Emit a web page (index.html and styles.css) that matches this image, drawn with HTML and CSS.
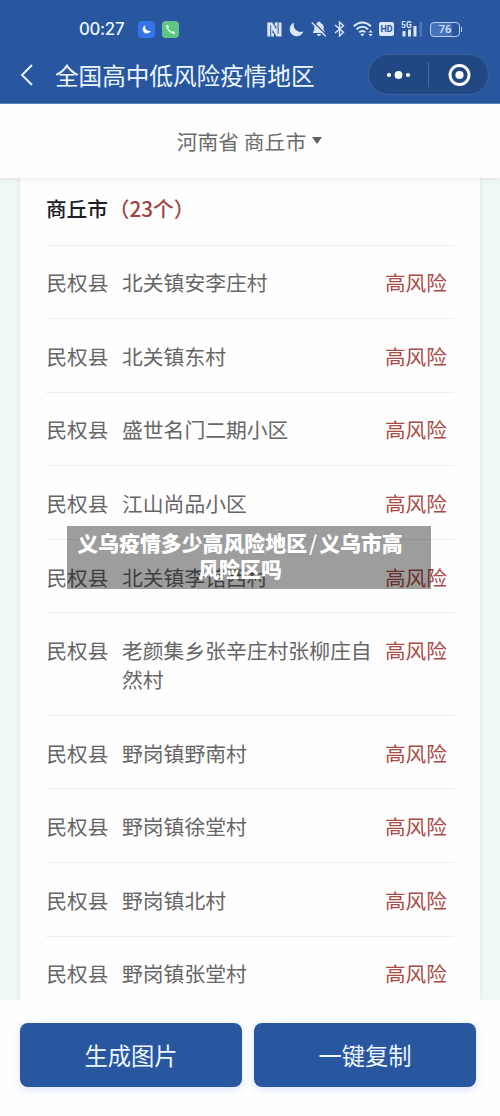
FILE: index.html
```html
<!DOCTYPE html>
<html lang="zh-CN">
<head>
<meta charset="utf-8">
<title>全国高中低风险疫情地区</title>
<link rel="stylesheet" href="styles.css">
</head>
<body>
<div class="screen">
  <header class="top">
    <div class="status">
      <span class="clock">00:27</span>
      <svg class="app-moon" width="17" height="17" viewBox="0 0 17 17"><rect width="17" height="17" rx="4" fill="#3473e8"/><path d="M7.2 4.2A4.3 4.3 0 1 0 12.9 9.8 4.5 4.5 0 0 1 7.2 4.2Z" fill="#fff"/></svg>
      <svg class="app-phone" width="17" height="17" viewBox="0 0 17 17"><rect width="17" height="17" rx="4" fill="#5fc584"/><path d="M4.900 4.500Q5 10.500 12.300 12.500" fill="none" stroke="#e6fff0" stroke-width="1.400"/><path d="M4.200 4.200 5.900 3.800 7 6 5.500 7.200ZM9.600 11.300 10.900 9.900 13 11.200 12.400 12.900Z" fill="#e6fff0"/></svg>
      <div class="signals">
        <svg width="15" height="15" viewBox="0 0 15 15"><path d="M.3 .5H5.200L9.300 7.500V3.800H7.800V.5H14.500V14.500H9.600L5.500 7.500V11.200H7V14.500H.3Z" fill="#dce7fa"/><path d="M3.700 3.200V14.500M11.100 .5V11.800" stroke="#28579f" stroke-width="1"/></svg>
        <svg width="15" height="15" viewBox="0 0 15 15"><path d="M5 .8A7 7 0 1 0 14.300 9.600 7.200 7.200 0 0 1 5 .8Z" fill="#dce7fa"/></svg>
        <svg width="16" height="16" viewBox="0 0 16 16"><path d="M2 12V10.800L3.300 9.500V6.500C3.300 4 4.800 2.500 6.600 2V.8H9.400V2C11.500 2.600 12.700 4.200 12.700 6.500V9.500L14 10.800V12Z" fill="#dce7fa"/><path d="M6 13H10A2 2 0 0 1 6 13Z" fill="#dce7fa"/><path d="M1.800 .5 15.600 14.300" stroke="#28579f" stroke-width="1.500"/><path d="M.8 1.500 14.600 15.300" stroke="#dce7fa" stroke-width="1.300"/></svg>
        <svg width="11" height="16" viewBox="0 0 11 16"><path d="M1 4 9.500 11.300 5.500 15V1L9.500 4.700 1 12" fill="none" stroke="#dce7fa" stroke-width="1.400"/></svg>
        <svg width="21" height="16" viewBox="0 0 21 16"><g fill="none" stroke="#dce7fa" stroke-width="1.900"><path d="M.7 5.200Q9.300-2.200 18 5.200"/><path d="M3.500 8.300Q9.300 3.400 15.200 8.300"/><path d="M6.200 11.300Q9.300 8.700 12.500 11.300"/></g><path d="M7.300 13.200Q9.300 11.700 11.300 13.200L9.300 15.500ZM15.500 11.400 17.600 9 19.700 11.400ZM15.500 13 17.600 15.400 19.700 13Z" fill="#dce7fa"/></svg>
        <span class="hd">HD</span>
        <svg width="22" height="16" viewBox="0 0 22 16"><text class="net" x="0" y="7">5G</text><path d="M1.500 10H4.500V15.500H1.500ZM7 8.500H10V15.500H7ZM12.500 5H15.500V15.500H12.500Z" fill="#dce7fa"/><path d="M18.500 1H21.200V15.500H18.500Z" fill="#4a77bd"/></svg>
        <span class="battery">76</span>
      </div>
    </div>
    <div class="nav">
      <svg width="14" height="24" viewBox="0 0 14 24"><path d="M12 2 2 12 12 22" fill="none" stroke="#eef7ff" stroke-width="1.900"/></svg>
      <h1 class="title">全国高中低风险疫情地区</h1>
      <div class="capsule">
        <svg width="26" height="10" viewBox="0 0 26 10"><g fill="#fff"><circle cx="3" cy="5" r="2.100"/><circle cx="12.500" cy="5" r="3.900"/><circle cx="22" cy="5" r="2.100"/></g></svg>
        <span class="divider"></span>
        <svg width="24" height="24" viewBox="0 0 24 24"><circle cx="12.500" cy="12" r="9.500" fill="none" stroke="#fff" stroke-width="2.900"/><circle cx="12.500" cy="12" r="4.100" fill="#fff"/></svg>
      </div>
    </div>
  </header>

  <div class="picker">河南省 商丘市<span class="caret"></span></div>

  <main class="content">
    <section class="card">
      <h2 class="city">商丘市<span class="count">（23个）</span></h2>
      <div class="row"><span class="county">民权县</span><span class="place">北关镇安李庄村</span><span class="risk">高风险</span></div>
      <div class="row"><span class="county">民权县</span><span class="place">北关镇东村</span><span class="risk">高风险</span></div>
      <div class="row"><span class="county">民权县</span><span class="place">盛世名门二期小区</span><span class="risk">高风险</span></div>
      <div class="row"><span class="county">民权县</span><span class="place">江山尚品小区</span><span class="risk">高风险</span></div>
      <div class="row"><span class="county">民权县</span><span class="place">北关镇李馆西村</span><span class="risk">高风险</span></div>
      <div class="row"><span class="county">民权县</span><span class="place">老颜集乡张辛庄村张柳庄自然村</span><span class="risk">高风险</span></div>
      <div class="row"><span class="county">民权县</span><span class="place">野岗镇野南村</span><span class="risk">高风险</span></div>
      <div class="row"><span class="county">民权县</span><span class="place">野岗镇徐堂村</span><span class="risk">高风险</span></div>
      <div class="row"><span class="county">民权县</span><span class="place">野岗镇北村</span><span class="risk">高风险</span></div>
      <div class="row"><span class="county">民权县</span><span class="place">野岗镇张堂村</span><span class="risk">高风险</span></div>
    </section>
  </main>

  <footer class="actions">
    <button class="btn">生成图片</button>
    <button class="btn">一键复制</button>
  </footer>

  <div class="caption">义乌疫情多少高风险地区<span class="slash">/</span>义乌市高<br>风险区吗</div>
</div>
</body>
</html>
```
FILE: styles.css
```css
* { box-sizing: border-box; }
body {
  margin: 0;
  font-family: "Noto Sans CJK SC", sans-serif;
  font-weight: 400;
  color: #666668;
}
h1, h2 { margin: 0; }
svg { display: block; flex: none; }

.screen {
  position: relative;
  display: flex;
  flex-direction: column;
  width: 500px;
  height: 1116px;
  overflow: hidden;
  background: #fefefe;
}

.top {
  flex: none;
  height: 104px;
  background: #28579f;
  border-bottom: 1px solid #5f86c4;
}
.status {
  display: flex;
  align-items: center;
  height: 58px;
  padding-left: 79px;
}
.clock {
  width: 59px;
  font: 500 16.800px/20px Inter, sans-serif;
  letter-spacing: -0.3px;
  color: #eaf6ff;
}
.app-phone { margin-left: 7px; }
.signals {
  display: grid;
  grid-template-columns: 22px 22px 23px 19px 26px 22px 29px 34px;
  align-items: center;
  margin-left: 88px;
}
.hd {
  width: 15px;
  height: 14px;
  border-radius: 2px;
  background: #dce7fa;
  color: #28579f;
  font: 700 9px/14px Roboto, sans-serif;
  text-align: center;
}
.net { font: 700 8.500px Roboto, sans-serif; fill: #dce7fa; }
.battery {
  position: relative;
  width: 30px;
  height: 15px;
  border: 1.500px solid #b9cdef;
  border-radius: 4px;
  background: linear-gradient(90deg, #4672bb 74%, #28579f 74%);
  color: #dce7fa;
  font: 500 11px/13px Roboto, sans-serif;
  text-align: center;
}
.battery::after {
  content: "";
  position: absolute;
  right: -3px;
  top: 4px;
  width: 1.500px;
  height: 5px;
  background: #b9cdef;
}

.nav {
  display: flex;
  align-items: center;
  height: 33px;
  padding-left: 20px;
}
.title {
  margin-left: 21px;
  font-size: 23.600px;
  line-height: 34px;
  font-weight: 400;
  color: #eef7ff;
  white-space: nowrap;
}
.capsule {
  flex: none;
  display: flex;
  align-items: center;
  width: 121px;
  height: 41px;
  margin-left: auto;
  margin-right: 11px;
  padding-left: 17px;
  border: 1px solid #3b619d;
  border-radius: 21px;
  background: #214882;
}
.divider { width: 1px; height: 25px; margin: 0 18px 0 16px; background: #46699f; }

.picker {
  position: relative;
  z-index: 1;
  flex: none;
  display: flex;
  align-items: center;
  justify-content: center;
  height: 74px;
  padding: 0 1px 1px 0;
  background: #fefefe;
  box-shadow: 0 1px 5px rgba(0, 0, 0, .09);
  font-size: 20.800px;
  color: #6c6c6c;
}
.caret {
  margin-left: 6px;
  border: 5.500px solid transparent;
  border-top: 7px solid #606060;
  border-bottom: 0;
}

.content {
  flex: none;
  height: 822px;
  padding: 0 20px;
  overflow: hidden;
  background: #eff6f6;
}
.card {
  height: 100%;
  padding: 0 26px;
  overflow: hidden;
  background: #fefefe;
  box-shadow: 0 0 5px rgba(0, 0, 0, .07);
}
.city {
  display: flex;
  height: 66.500px;
  font-size: 20.600px;
  line-height: 60px;
  font-weight: 500;
  color: #1c1f29;
}
.count { margin-left: 1px; font-size: 20.700px; color: #a04343; }
.row {
  display: grid;
  grid-template-columns: 76px 256px 76px;
  padding: 22.800px 0 21px;
  border-top: 1px solid #eee;
  font-size: 20.800px;
  line-height: 28.800px;
}
.county { padding-left: .5px; font-size: 20.600px; }
.risk { padding-left: 7px; font-size: 20.600px; color: #a94c46; }

.actions {
  flex: none;
  display: grid;
  grid-template-columns: 222px 222px;
  gap: 12px;
  height: 116px;
  padding: 23px 20px 29px;
  background: #fefefe;
}
.btn {
  border: 0;
  border-radius: 8px;
  padding: 0 0 1px;
  background: #28579f;
  box-shadow: 0 2px 8px rgba(60, 110, 220, .2);
  color: #eef7ff;
  font: inherit;
  font-size: 23.300px;
}

.caption {
  position: absolute;
  left: 67px;
  top: 526px;
  width: 364px;
  height: 63px;
  padding: 3px 18px 0 0;
  background: rgba(0, 0, 0, .38);
  color: #fff;
  font-size: 20.900px;
  line-height: 26px;
  font-weight: 900;
  text-align: center;
}
.slash { padding: 0 2px; font-weight: 500; }
```
